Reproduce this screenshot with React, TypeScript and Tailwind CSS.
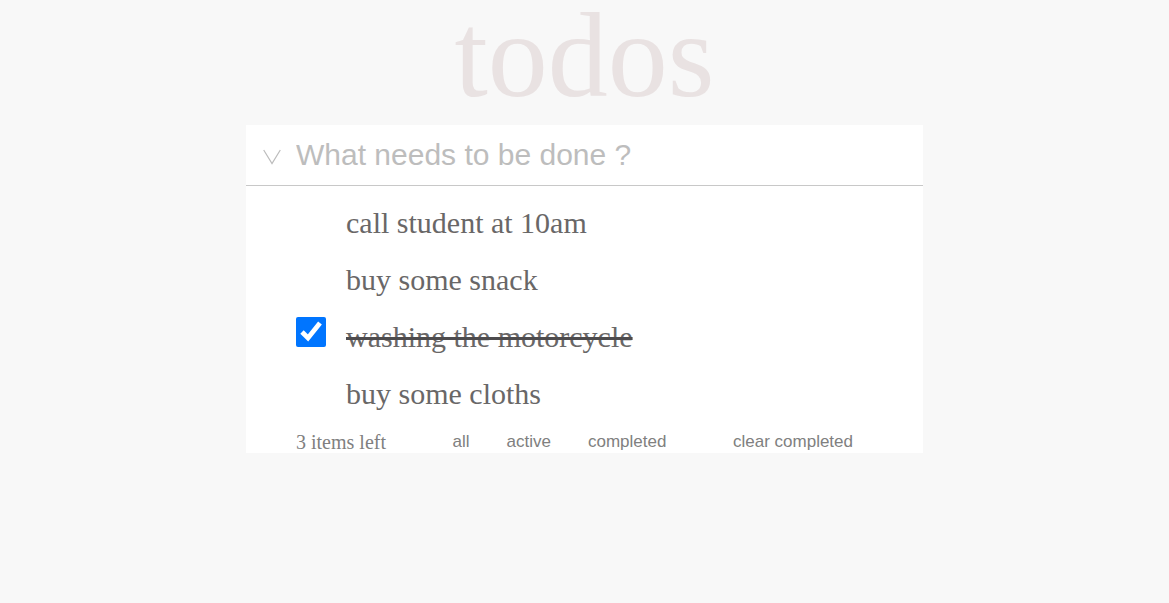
import { useState } from 'react';

type Filter = 'all' | 'active' | 'completed';

interface Todo {
  id: number;
  text: string;
  done: boolean;
}

const initialTodos: Todo[] = [
  { id: 1, text: 'call student at 10am', done: false },
  { id: 2, text: 'buy some snack', done: false },
  { id: 3, text: 'washing the motorcycle', done: true },
  { id: 4, text: 'buy some cloths', done: false },
];

function TodoRow({ todo, onToggle }: { todo: Todo; onToggle: () => void }) {
  return (
    <li className="flex h-[57px] items-center gap-5">
      <input
        id={`todo-${todo.id}`}
        type="checkbox"
        checked={todo.done}
        onChange={onToggle}
        className={`mb-2.5 size-[30px] shrink-0 ${todo.done ? 'opacity-100' : 'opacity-0'}`}
      />
      <label
        htmlFor={`todo-${todo.id}`}
        className={`text-[30px] leading-[34px] text-[#696767] ${todo.done ? 'line-through decoration-[#4d4b4d]' : ''}`}
      >
        {todo.text}
      </label>
    </li>
  );
}

export default function App() {
  const [todos, setTodos] = useState(initialTodos);
  const [filter, setFilter] = useState<Filter>('all');
  const [draft, setDraft] = useState('');

  const visible = todos.filter((t) => filter === 'all' || (filter === 'completed') === t.done);
  const left = todos.filter((t) => !t.done).length;
  const toggle = (id: number) => setTodos(todos.map((t) => (t.id === id ? { ...t, done: !t.done } : t)));
  const toggleAll = () => setTodos(todos.map((t) => ({ ...t, done: left > 0 })));
  const add = () => {
    if (draft.trim()) {
      setTodos([...todos, { id: Date.now(), text: draft.trim(), done: false }]);
      setDraft('');
    }
  };

  return (
    <div className="min-h-screen bg-[#f8f8f8] font-['Liberation_Serif',serif]">
      <h1 className="pb-[13px] text-center text-[120px] leading-[112px] text-[#e9e2e2]">todos</h1>
      <main className="mx-auto w-full max-w-[677px] bg-white">
        <form
          className="flex h-[61px] items-center border-b border-[#c8c8c8]"
          onSubmit={(e) => {
            e.preventDefault();
            add();
          }}
        >
          <button type="button" aria-label="Toggle all" onClick={toggleAll} className="flex w-[50px] shrink-0 justify-center pl-0.5 pt-1">
            <svg width="18" height="16" viewBox="0 0 18 16" fill="none" stroke="#bcbcbc" strokeWidth="1.2">
              <path d="M0.7 1 9 14.5 17.3 1" />
            </svg>
          </button>
          <input
            type="text"
            aria-label="New todo"
            placeholder="What needs to be done ?"
            value={draft}
            onChange={(e) => setDraft(e.target.value)}
            className="min-w-0 flex-1 font-['Liberation_Sans',sans-serif] text-[30px] leading-[34px] text-[#696767] outline-none placeholder:text-[#bdbdbd]"
          />
        </form>
        <ul className="px-[50px] pt-2">
          {visible.map((t) => (
            <TodoRow key={t.id} todo={t} onToggle={() => toggle(t.id)} />
          ))}
        </ul>
        <footer className="flex items-center justify-between pt-[9px] pr-[70px] pl-[50px] text-[#808080]">
          <span className="text-xl leading-[22px]">{left} items left</span>
          <nav aria-label="Filters" className="flex gap-[37px] font-['Liberation_Sans',sans-serif] text-[17px] leading-[22px]">
            <button type="button" onClick={() => setFilter('all')}>all</button>
            <button type="button" onClick={() => setFilter('active')}>active</button>
            <button type="button" onClick={() => setFilter('completed')}>completed</button>
          </nav>
          <button
            type="button"
            onClick={() => setTodos(todos.filter((t) => !t.done))}
            className="font-['Liberation_Sans',sans-serif] text-[17px] leading-[22px]"
          >
            clear completed
          </button>
        </footer>
      </main>
    </div>
  );
}
